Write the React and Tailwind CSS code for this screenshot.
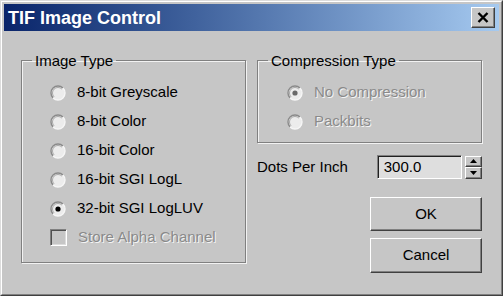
import React from 'react';

const font = { fontFamily: '"Liberation Sans", Arial, sans-serif' };

function Radio({ checked, disabled }) {
  return (
    <svg width="16" height="16" viewBox="0 0 16 16" className="shrink-0">
      <circle cx="8" cy="8" r="7" fill="#ececec" />
      <path d="M3.05 12.95 A7 7 0 0 1 12.95 3.05" stroke="#8a8a8a" strokeWidth="1.4" fill="none" />
      <path d="M4.1 11.9 A5.5 5.5 0 0 1 11.9 4.1" stroke="#a8a8a8" strokeWidth="1" fill="none" />
      <path d="M12.95 3.05 A7 7 0 0 1 3.05 12.95" stroke="#f6f6f6" strokeWidth="1.4" fill="none" />
      {checked && <circle cx="8" cy="8" r="2.6" fill={disabled ? '#6a6a6a' : '#000'} />}
    </svg>
  );
}

function Option({ label, checked, disabled }) {
  return (
    <div className="flex items-center h-[29px] gap-[11px]">
      <Radio checked={checked} disabled={disabled} />
      <span
        className={
          disabled
            ? 'text-[#8a8a8a] [text-shadow:1px_1px_0_#f4f4f4]'
            : 'text-black'
        }
      >
        {label}
      </span>
    </div>
  );
}

function Group({ title, children, className }) {
  return (
    <fieldset
      className={`border border-[#808080] shadow-[1px_1px_0_#f2f2f2,inset_1px_1px_0_#f2f2f2] ${className}`}
    >
      <legend className="ml-[10px] px-[3px] leading-[17px] text-black">{title}</legend>
      {children}
    </fieldset>
  );
}

function RaisedButton({ children, className }) {
  return (
    <button
      className={`flex items-center justify-center bg-[#c6c6c6] border border-t-white border-l-white border-r-[#404040] border-b-[#404040] shadow-[inset_-1px_-1px_0_#808080] text-black ${className}`}
    >
      {children}
    </button>
  );
}

export default function App() {
  return (
    <div
      className="w-[503px] h-[296px] border border-t-[#dcdcdc] border-l-[#dcdcdc] border-r-[#404040] border-b-[#404040] text-[15px]"
      style={font}
    >
      <div className="h-full flex flex-col border border-t-white border-l-white border-r-[#808080] border-b-[#808080] bg-[#c6c6c6] p-[2px]">
        {/* Title bar */}
        <div className="h-[27px] shrink-0 flex items-center justify-between bg-linear-to-r from-[#0a246a] to-[#a6caf0] pl-[4px] pr-[4px]">
          <span className="text-white font-bold text-[18px] leading-none">TIF Image Control</span>
          <RaisedButton className="w-[24px] h-[21px]">
            <svg width="12" height="11" viewBox="0 0 12 11">
              <path d="M1.5 1 L10.5 10 M10.5 1 L1.5 10" stroke="#000" strokeWidth="2.4" />
            </svg>
          </RaisedButton>
        </div>

        {/* Body */}
        <div className="flex-1 flex gap-[11px] pl-[17px] pt-[21px]">
          <Group title="Image Type" className="w-[225px] h-[211px]">
            <div className="pl-[28px] pt-[9px]">
              <Option label="8-bit Greyscale" />
              <Option label="8-bit Color" />
              <Option label="16-bit Color" />
              <Option label="16-bit SGI LogL" />
              <Option label="32-bit SGI LogLUV" checked />
              <div className="flex items-center h-[29px] gap-[11px]">
                <span className="w-[17px] h-[17px] shrink-0 border border-t-[#808080] border-l-[#808080] border-r-white border-b-white shadow-[inset_1px_1px_0_#505050,inset_-1px_-1px_0_#dcdcdc] bg-[#c6c6c6]" />
                <span className="text-[#8a8a8a] [text-shadow:1px_1px_0_#f4f4f4]">Store Alpha Channel</span>
              </div>
            </div>
          </Group>

          <div className="flex flex-col w-[225px]">
            <Group title="Compression Type" className="h-[91px]">
              <div className="pl-[29px] pt-[9px]">
                <Option label="No Compression" checked disabled />
                <Option label="Packbits" disabled />
              </div>
            </Group>

            <div className="flex items-center mt-[12px] h-[24px]">
              <span className="w-[121px] text-black">Dots Per Inch</span>
              <div className="w-[86px] h-[24px] flex items-center pl-[6px] bg-[#dedede] border border-t-[#808080] border-l-[#808080] border-r-white border-b-white shadow-[inset_1px_1px_0_#202020] text-black">
                300.0
              </div>
              <div className="ml-[3px] flex flex-col w-[17px] h-[23px]">
                <RaisedButton className="h-[11.5px] w-[17px]">
                  <svg width="7" height="4" viewBox="0 0 7 4"><path d="M0 4 L3.5 0 L7 4 Z" fill="#000" /></svg>
                </RaisedButton>
                <RaisedButton className="h-[11.5px] w-[17px]">
                  <svg width="7" height="4" viewBox="0 0 7 4"><path d="M0 0 L7 0 L3.5 4 Z" fill="#000" /></svg>
                </RaisedButton>
              </div>
            </div>

            <div className="flex flex-col items-end mt-[18px] gap-[7px]">
              <RaisedButton className="w-[112px] h-[34px]">OK</RaisedButton>
              <RaisedButton className="w-[112px] h-[35px]">Cancel</RaisedButton>
            </div>
          </div>
        </div>
      </div>
    </div>
  );
}
